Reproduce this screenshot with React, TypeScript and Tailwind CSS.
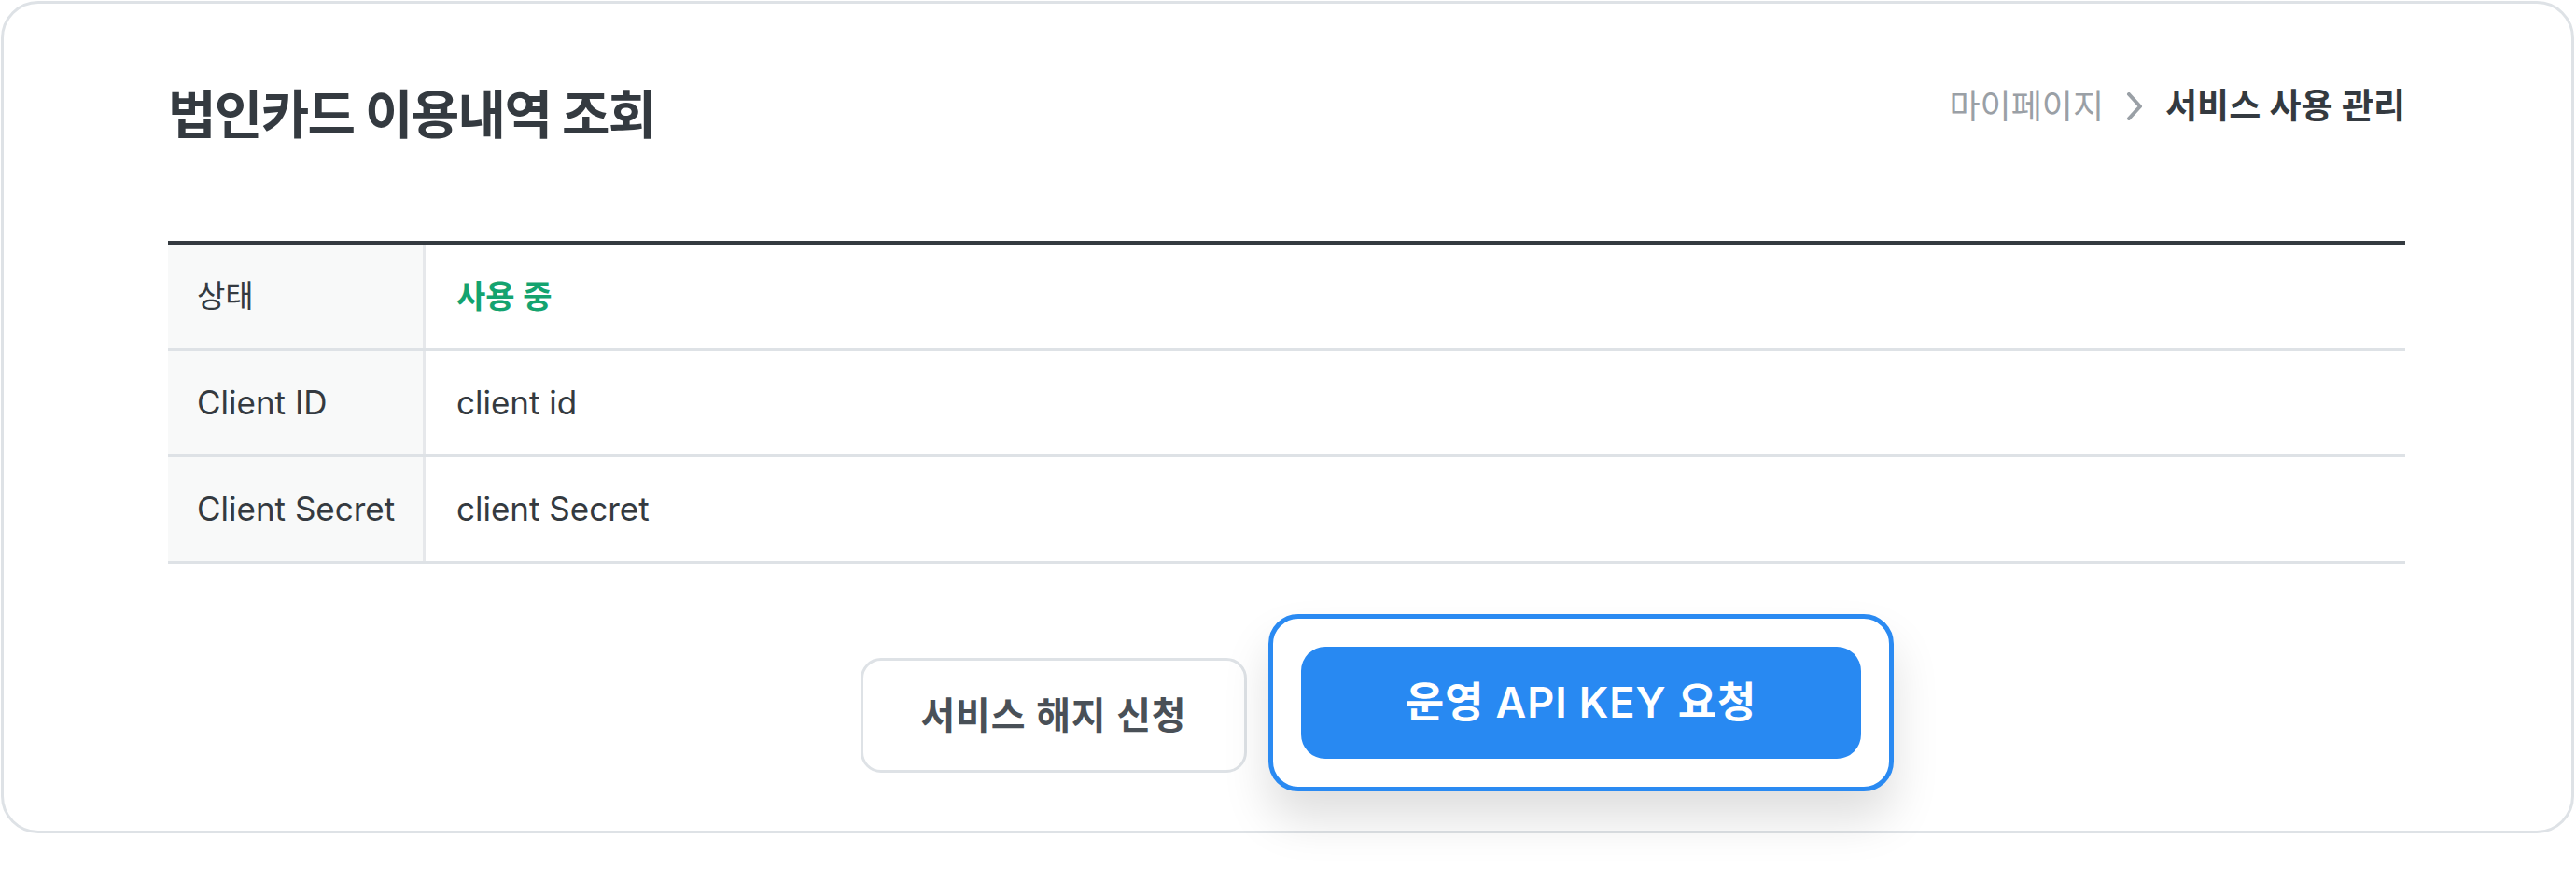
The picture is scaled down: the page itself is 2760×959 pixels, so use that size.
const font = { fontFamily: 'Inter, "Noto Sans CJK KR", sans-serif' }

interface RowProps {
  label: string
  labelClass?: string
  children: React.ReactNode
}

function InfoRow({ label, labelClass = 'text-[35px]', children }: RowProps) {
  return (
    <div className="flex h-[114px] border-b-[3px] border-[#dee2e6]">
      <div
        className={`w-[276px] shrink-0 flex items-center pl-[31px] bg-[#f8f9f9] border-r-[3px] border-[#e6e8eb] text-[#343a40] ${labelClass}`}
      >
        {label}
      </div>
      <div className="flex-1 flex items-center pl-[33px] text-[35px] text-[#343a40]">{children}</div>
    </div>
  )
}

function Chevron() {
  return (
    <svg width="18" height="30" viewBox="0 0 18 30" fill="none" className="mx-[24px]">
      <path d="M3 2 L15 15 L3 28" stroke="#9aa0a6" strokeWidth="4" strokeLinecap="round" strokeLinejoin="round" />
    </svg>
  )
}

export default function App() {
  return (
    <div className="w-[2760px] h-[959px] bg-white p-[1px]" style={font}>
      <div className="w-[2757px] h-[892px] border-[3px] border-[#dee2e6] rounded-[40px] bg-white pt-[85px] pl-[176px]">
        <div className="w-[2397px]">
          <div className="flex justify-between items-start">
            <h1 className="text-[56px] leading-[68px] font-bold tracking-[-0.03em] text-[#343a40]">
              법인카드 이용내역 조회
            </h1>
            <div className="flex items-center mt-[4px] h-[42px] text-[36px]">
              <span className="text-[#9aa0a6]">마이페이지</span>
              <Chevron />
              <span className="font-semibold text-[#343a40] text-[37px]">서비스 사용 관리</span>
            </div>
          </div>

          <div className="mt-[101px] border-t-[4px] border-[#343a40]">
            <InfoRow label="상태" labelClass="text-[33px]">
              <span className="font-semibold text-[#14a36f] text-[34px]">사용 중</span>
            </InfoRow>
            <InfoRow label="Client ID">client id</InfoRow>
            <InfoRow label="Client Secret">client Secret</InfoRow>
          </div>

          <div className="flex items-start mt-[54px] ml-[742px]">
            <button className="mt-[47px] w-[414px] h-[123px] border-[3px] border-[#dee2e6] rounded-[22px] bg-white text-[40px] tracking-[0.02em] font-semibold text-[#495057]">
              서비스 해지 신청
            </button>
            <div className="ml-[23px] p-[30px] border-[5px] border-[#2a8af2] rounded-[32px] bg-white shadow-[0_30px_50px_rgba(0,0,0,0.13)]">
              <button className="w-[600px] h-[120px] rounded-[26px] bg-[#2889f2] text-[45px] tracking-[0.02em] font-semibold text-white">
                운영 API KEY 요청
              </button>
            </div>
          </div>
        </div>
      </div>
    </div>
  )
}
